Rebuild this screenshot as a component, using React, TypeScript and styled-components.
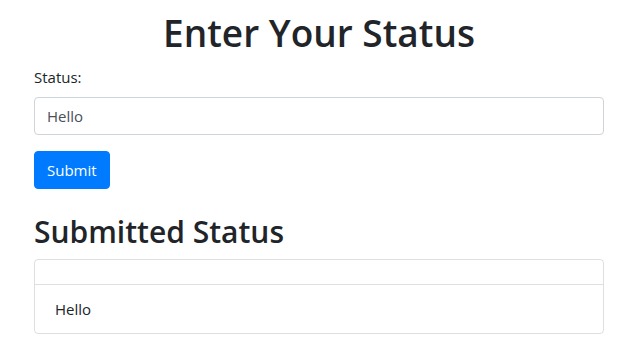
import React, { useState } from 'react';
import styled, { createGlobalStyle } from 'styled-components';

const GlobalStyle = createGlobalStyle`
  * { box-sizing: border-box; }
  html, body { margin: 0; padding: 0; background: #fff; }
  body {
    font-family: "Open Sans", "Noto Sans", sans-serif;
    font-size: 16px;
    line-height: 1.5;
    color: #212529;
  }
`;

const Container = styled.div`
  width: 570px;
  margin-left: 34px;
  padding-top: 9px;
`;

const Title = styled.h1`
  margin: 0 0 8px;
  font-size: 37px;
  font-weight: 600;
  line-height: 48px;
  text-align: center;
`;

const FormGroup = styled.div`
  margin-bottom: 16px;
`;

const Label = styled.label`
  display: inline-block;
  margin-bottom: 8px;
  font-size: 15px;
`;

const Input = styled.input`
  display: block;
  width: 100%;
  height: 38px;
  padding: 6px 12px;
  font-family: inherit;
  font-size: 15px;
  line-height: 24px;
  color: #495057;
  background: #fff;
  border: 1px solid #ced4da;
  border-radius: 4px;
  outline: none;
`;

const Button = styled.button`
  display: inline-block;
  height: 38px;
  padding: 6px 12px;
  font-family: inherit;
  font-size: 15px;
  line-height: 24px;
  color: #fff;
  background: #007bff;
  border: 1px solid #007bff;
  border-radius: 4px;
  cursor: pointer;
`;

const SubTitle = styled.h2`
  margin: 24px 0 8px;
  font-size: 30px;
  font-weight: 600;
  line-height: 38px;
`;

const Card = styled.div`
  border: 1px solid rgba(0, 0, 0, 0.125);
  border-radius: 4px;
`;

const CardHeader = styled.div`
  height: 25px;
  border-bottom: 1px solid rgba(0, 0, 0, 0.125);
`;

const CardBody = styled.div`
  padding: 12px 20px;
  font-size: 15px;
  line-height: 24px;
`;

export default function App() {
  const [status, setStatus] = useState('Hello');
  return (
    <>
      <GlobalStyle />
      <Container>
        <Title>Enter Your Status</Title>
        <FormGroup>
          <Label htmlFor="status">Status:</Label>
          <Input id="status" value={status} onChange={e => setStatus(e.target.value)} />
        </FormGroup>
        <Button type="button">Submit</Button>
        <SubTitle>Submitted Status</SubTitle>
        <Card>
          <CardHeader />
          <CardBody>Hello</CardBody>
        </Card>
      </Container>
    </>
  );
}
